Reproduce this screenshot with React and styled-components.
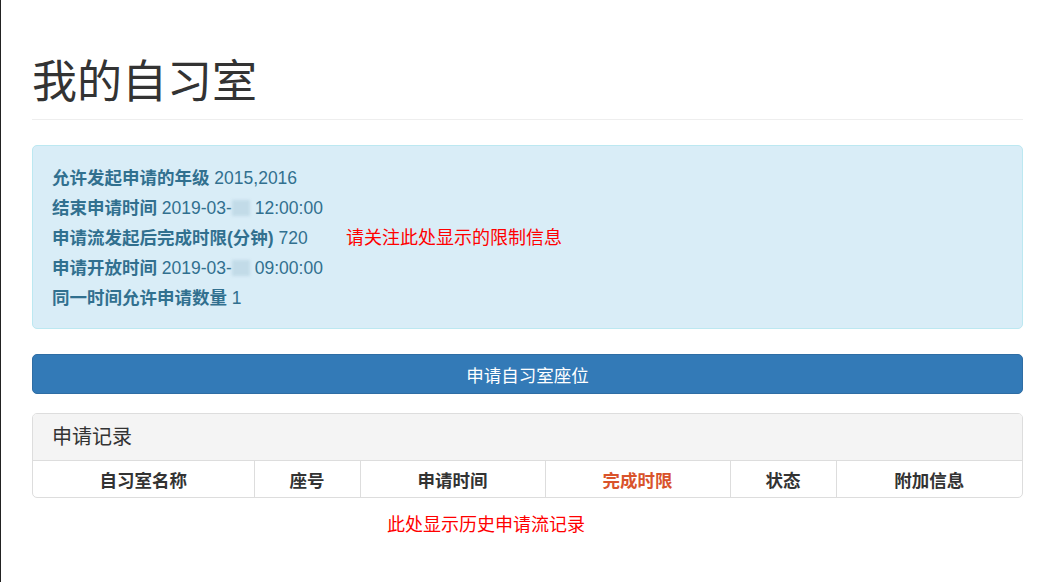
import React from "react";
import styled, { createGlobalStyle } from "styled-components";

const GlobalStyle = createGlobalStyle`
  html, body {
    margin: 0;
    padding: 0;
    background: #fff;
  }
  body {
    font-family: "Liberation Sans", "Noto Sans CJK SC", sans-serif;
    font-size: 17.5px;
    color: #333;
  }
`;

const Page = styled.div`
  min-height: 582px;
  box-sizing: border-box;
  border-left: 1px solid #222;
  padding: 0 29px 0 31px;
  overflow: hidden;
`;

const Header = styled.div`
  margin-top: 58px;
  padding-bottom: 11px;
  border-bottom: 1px solid #eee;
`;

const Title = styled.h1`
  margin: 0;
  font-size: 45px;
  font-weight: 400;
  line-height: 50px;
  color: #333;
`;

const Alert = styled.div`
  margin-top: 25px;
  display: grid;
  grid-template-columns: 294px 1fr;
  align-items: center;
  padding: 17px 19px 15px;
  background: #d9edf7;
  border: 1px solid #bce8f1;
  border-radius: 5px;
  color: #31708f;
`;

const InfoList = styled.div`
  display: flex;
  flex-direction: column;
`;

const InfoLine = styled.div`
  line-height: 30px;
  white-space: nowrap;
`;

const Label = styled.b`
  font-weight: 700;
`;

const Blur = styled.span`
  display: inline-block;
  width: ${(p) => p.w}px;
  height: 16px;
  vertical-align: -2px;
  background: #c2dbe8;
  filter: blur(1.5px);
`;

const Note = styled.div`
  color: #f00;
  font-size: 18px;
  line-height: 25px;
  margin-left: ${(p) => p.indent || 0}px;
  margin-top: ${(p) => p.top || 0}px;
`;

const ApplyButton = styled.button`
  display: block;
  width: 100%;
  margin-top: 25px;
  height: 40px;
  padding: 0;
  font-family: inherit;
  font-size: 17.5px;
  color: #fff;
  background: #337ab7;
  border: 1px solid #2e6da4;
  border-radius: 5px;
  cursor: pointer;
`;

const Panel = styled.div`
  margin-top: 19px;
  border: 1px solid #ddd;
  border-radius: 5px;
  overflow: hidden;
`;

const PanelHeading = styled.div`
  padding: 12px 19px;
  height: 47px;
  box-sizing: border-box;
  background: #f4f4f4;
  border-bottom: 1px solid #ddd;
  font-size: 20px;
  line-height: 22px;
  color: #333;
`;

const Table = styled.table`
  width: 100%;
  table-layout: fixed;
  border-collapse: collapse;
`;

const Th = styled.th`
  height: 36px;
  padding: 0 6px;
  font-weight: 700;
  text-align: center;
  color: ${(p) => p.color || "#333"};
  border-left: 1px solid #ddd;
  &:first-child {
    border-left: none;
  }
`;

const columns = [
  { name: "自习室名称", width: 221 },
  { name: "座号", width: 106 },
  { name: "申请时间", width: 185 },
  { name: "完成时限", width: 185, color: "#d9532b" },
  { name: "状态", width: 106 },
  { name: "附加信息", width: 186 },
];

const App = () => {
  return (
    <Page>
      <GlobalStyle />
      <Header>
        <Title>我的自习室</Title>
      </Header>

      <Alert>
        <InfoList>
          <InfoLine>
            <Label>允许发起申请的年级</Label> 2015,2016
          </InfoLine>
          <InfoLine>
            <Label>结束申请时间</Label> 2019-03-<Blur w={18} /> 12:00:00
          </InfoLine>
          <InfoLine>
            <Label>申请流发起后完成时限(分钟)</Label> 720
          </InfoLine>
          <InfoLine>
            <Label>申请开放时间</Label> 2019-03-<Blur w={18} /> 09:00:00
          </InfoLine>
          <InfoLine>
            <Label>同一时间允许申请数量</Label> 1
          </InfoLine>
        </InfoList>
        <Note>请关注此处显示的限制信息</Note>
      </Alert>

      <ApplyButton>申请自习室座位</ApplyButton>

      <Panel>
        <PanelHeading>申请记录</PanelHeading>
        <Table>
          <colgroup>
            {columns.map((c) => (
              <col key={c.name} style={{ width: c.width }} />
            ))}
          </colgroup>
          <thead>
            <tr>
              {columns.map((c) => (
                <Th key={c.name} color={c.color}>
                  {c.name}
                </Th>
              ))}
            </tr>
          </thead>
        </Table>
      </Panel>

      <Note indent={355} top={15}>
        此处显示历史申请流记录
      </Note>
    </Page>
  );
};

export default App;
